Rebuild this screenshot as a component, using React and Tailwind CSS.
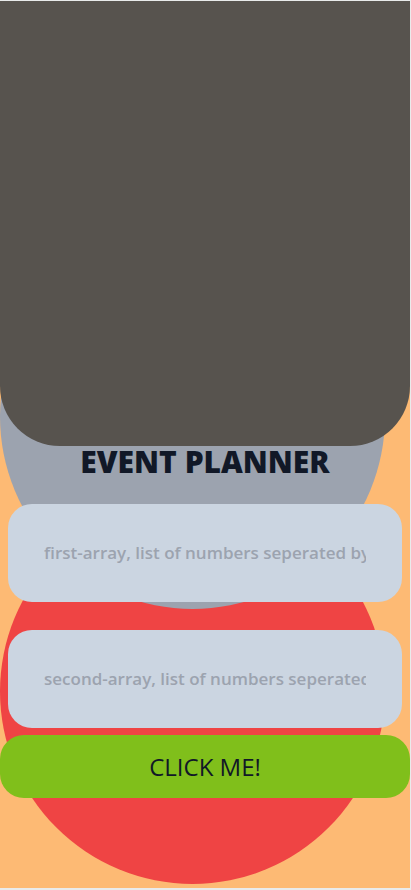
function Field({ id, label, placeholder }) {
  return (
    <div className="px-2">
      <label htmlFor={id} className="sr-only">{label}</label>
      <input
        id={id}
        type="text"
        placeholder={placeholder}
        className="block h-[98px] w-full rounded-3xl bg-[#cbd5e1] px-9 pb-0.5 text-[17px] font-semibold text-[#111827] placeholder:text-[#9ca3af] outline-none"
      />
    </div>
  );
}

export default function App() {
  return (
    <div className="bg-[#e9ebeb] pt-px pr-px pb-0.5 font-['Open_Sans','Noto_Sans',sans-serif] text-[#111827]">
      <main className="relative isolate overflow-hidden bg-[#fdba74] pb-[90px]">
        <div className="absolute bottom-1 left-0 -z-20 aspect-square w-[94%] rounded-full bg-[#ef4444]" />
        <div className="absolute bottom-[279px] left-0 -z-10 aspect-square w-[94%] rounded-full bg-[#9ca3af]" />
        <div className="h-[445px] rounded-b-[60px] bg-[#57534e]" />
        <h1 className="mb-[26px] text-center text-3xl leading-8 font-extrabold">EVENT PLANNER</h1>
        <form onSubmit={(event) => event.preventDefault()}>
          <div className="flex flex-col gap-7">
            <Field id="first-array" label="First array" placeholder="first-array, list of numbers seperated by comma" />
            <Field id="second-array" label="Second array" placeholder="second-array, list of numbers seperated by comma" />
          </div>
          <button type="submit" className="mt-[7px] block h-[63px] w-full rounded-3xl bg-[#80bf1b] text-2xl">
            CLICK ME!
          </button>
        </form>
      </main>
    </div>
  );
}
